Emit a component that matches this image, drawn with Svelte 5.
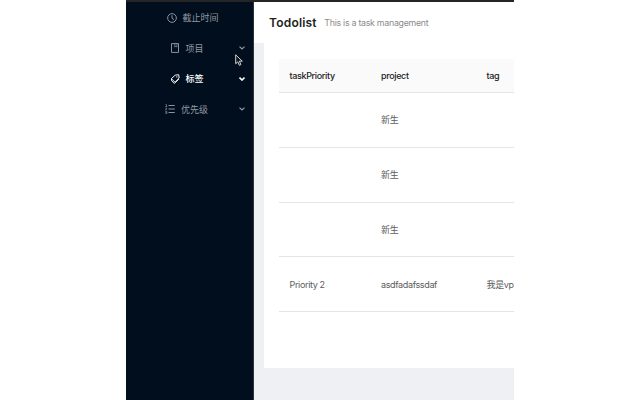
<script>
  const menu = [
    { icon: 'clock', label: '截止时间', x: 40.5, gap: 6 },
    { icon: 'book', label: '项目', x: 43.5, gap: 6, arrow: true },
    { icon: 'tags', label: '标签', x: 43.5, gap: 6, arrow: true, active: true },
    { icon: 'list', label: '优先级', x: 39, gap: 6, arrow: true }
  ];
  const rows = [
    ['', '新生', ''],
    ['', '新生', ''],
    ['', '新生', ''],
    ['Priority 2', 'asdfadafssdaf', '我是vp']
  ];
</script>

<div class="page">
  <div class="app">
    <div class="topbar"></div>
    <div class="layout">
      <nav class="sidebar">
        {#each menu as item}
          <div class="item" class:active={item.active} style="padding-left: {item.x}px; gap: {item.gap}px">
            <svg class="icon" viewBox="0 0 20 20" fill="none" stroke="currentColor" stroke-width="1.9">
              {#if item.icon === 'clock'}
                <circle cx="10" cy="10" r="8.7" />
                <path d="M10 4.5v6l4 2.8" />
              {:else if item.icon === 'book'}
                <path d="M3 1.2h14v17.6H3z" />
                <path d="M9.5 1.2v7l2.2-1.8 2.2 1.8v-7" stroke-width="1.4" />
              {:else if item.icon === 'tags'}
                <path d="M10.5 2.3l6.9-.9.9 6.9-8.2 8.1-7.6-7z" />
                <path d="M3 10v3.3l5.7 5.6L18 10" />
                <circle cx="13.7" cy="5.9" r="1.3" fill="currentColor" stroke="none" />
              {:else}
                <path d="M7 3h12.5M7 10h12.5M7 17h12.5" />
                <path d="M1 1h2v4M.5 5H4.5M.5 8.2h3.3L.8 11.8h3.5M.5 15h3.3v4H.5M1 17h2.6" stroke-width="1.2" />
              {/if}
            </svg>
            <span>{item.label}</span>
            {#if item.arrow}
              <svg class="arrow" viewBox="0 0 6 4" fill="none" stroke="currentColor" stroke-width="1.2"><path d="M.5.6L3 3 5.5.6" /></svg>
            {/if}
          </div>
        {/each}
      </nav>
      <main>
        <header>
          <h1>Todolist</h1>
          <p>This is a task management</p>
        </header>
        <section class="card">
          <div class="row head"><span>taskPriority</span><span>project</span><span>tag</span></div>
          {#each rows as row}
            <div class="row">
              {#each row as cell}<span>{cell}</span>{/each}
            </div>
          {/each}
        </section>
      </main>
    </div>
    <svg class="cursor" viewBox="0 0 8 12"><path d="M.7.8v9l2.1-2 1.5 3.5 1.6-.7-1.5-3.4h2.9z" fill="#111820" stroke="#e4e4e4" stroke-width=".9" /></svg>
  </div>
</div>

<style>
  .page {
    width: 640px;
    height: 400px;
    overflow: hidden;
    background: #fff;
    font-family: Inter, "Noto Sans CJK SC", sans-serif;
    font-size: 9px;
    color: #5c5c5c;
  }
  .app {
    position: relative;
    display: flex;
    flex-direction: column;
    width: 388px;
    height: 400px;
    margin-left: 126px;
    overflow: hidden;
  }
  .topbar { height: 2px; flex: none; background: #252427; }
  .layout { display: flex; flex: 1; min-height: 0; }
  .sidebar {
    flex: none;
    box-sizing: border-box;
    width: 128px;
    padding-top: .4px;
    background: #010e1d;
    border-right: 1px solid #2b333e;
    color: #929aa2;
  }
  .item {
    display: flex;
    align-items: center;
    box-sizing: border-box;
    height: 30.6px;
    padding-right: 8px;
    white-space: nowrap;
  }
  .item span { line-height: 14px; padding-top: 1px; }
  .active { color: #fff; }
  .active span { font-weight: 500; }
  .icon { width: 10px; height: 10px; flex: none; }
  .arrow { width: 6px; height: 4px; margin-left: auto; }
  .active .arrow { stroke-width: 1.6; }
  main {
    display: flex;
    flex-direction: column;
    flex: 1;
    min-width: 0;
    background: #eff0f4;
  }
  header {
    display: flex;
    align-items: center;
    gap: 7.5px;
    height: 41px;
    flex: none;
    padding-left: 15px;
    background: #fff;
  }
  h1 { margin: 0; font-size: 12px; font-weight: 600; letter-spacing: .2px; color: #222; }
  p { margin: 0; font-size: 8.8px; letter-spacing: -.27px; color: #8c8c8c; white-space: nowrap; }
  .card {
    box-sizing: border-box;
    height: 325px;
    margin-left: 10px;
    padding: 16px 0 0 15px;
    background: #fff;
  }
  .row {
    display: grid;
    grid-template-columns: 91.5px 105.5px 60px;
    align-items: center;
    box-sizing: border-box;
    height: 54.75px;
    padding-left: 10.5px;
    border-bottom: 1px solid #e5e5e5;
    font-size: 9px;
    letter-spacing: -.35px;
    white-space: nowrap;
    overflow: hidden;
  }
  .row span { line-height: 14px; padding-top: 1px; }
  .head { height: 34px; background: #fafafa; font-weight: 500; color: #222; }
  .head span { padding-top: 0; }
  .cursor { position: absolute; left: 109px; top: 54px; width: 8px; height: 12px; }
</style>
